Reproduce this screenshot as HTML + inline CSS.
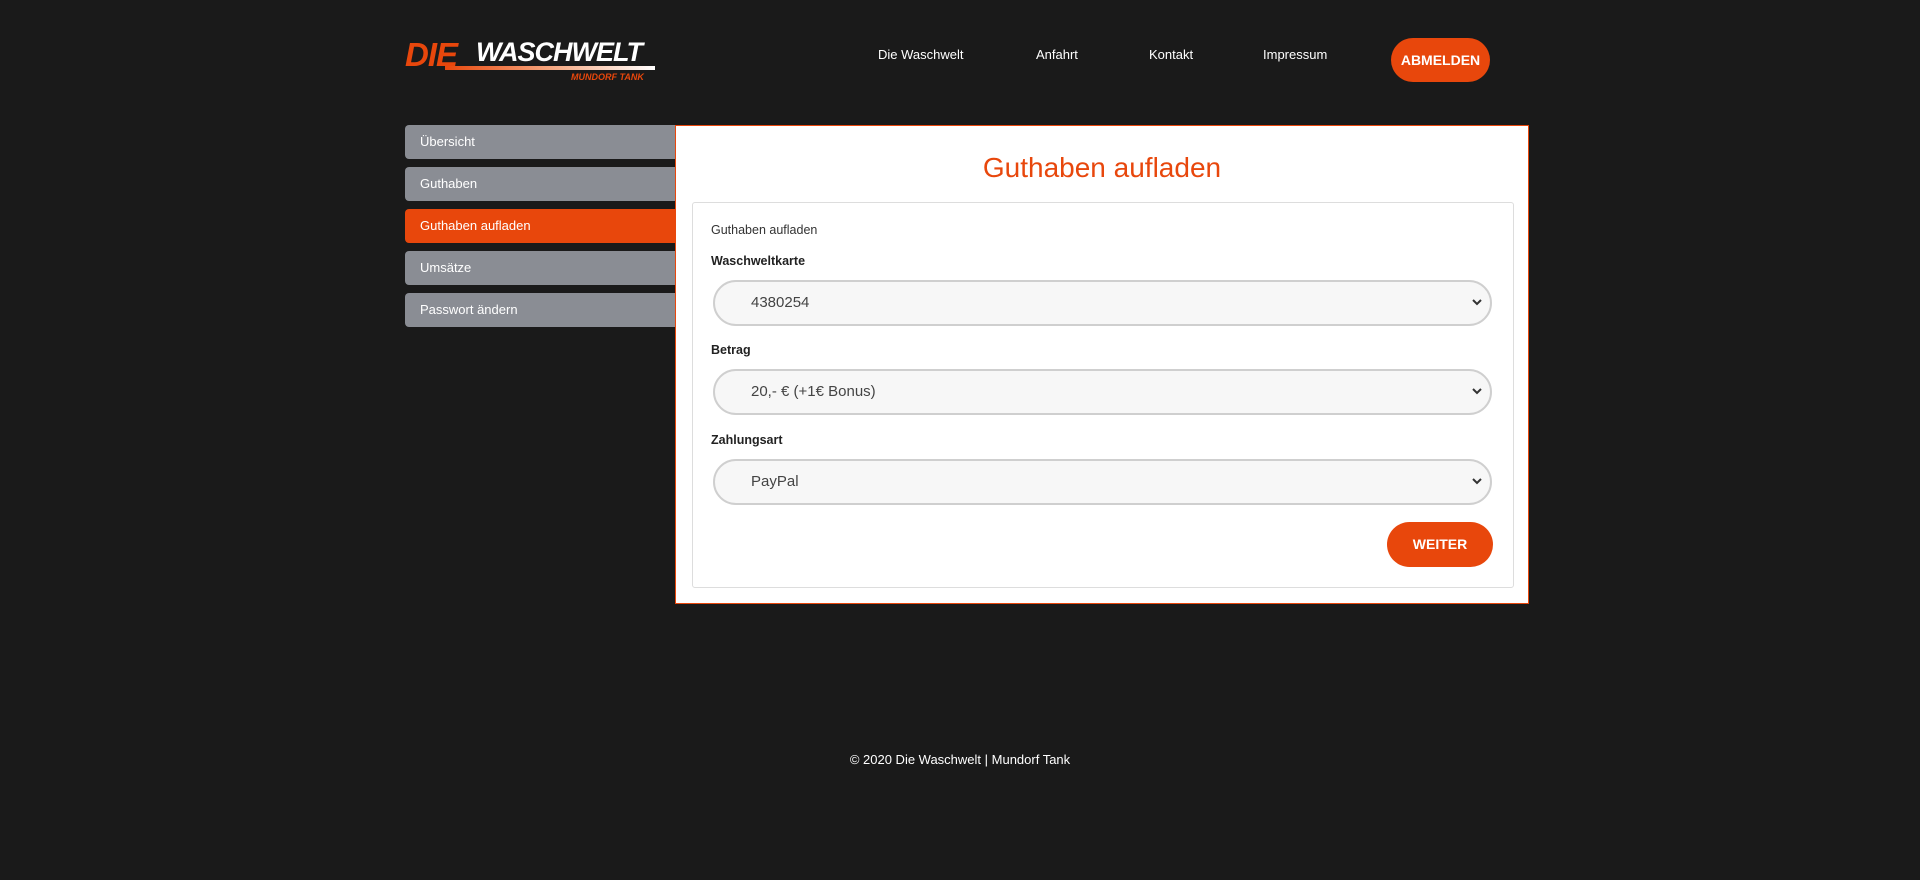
<!DOCTYPE html>
<html><head><meta charset="utf-8"><style>
*{box-sizing:border-box;margin:0;padding:0}
body{width:1920px;height:880px;background:#1a1a1a;font-family:"Liberation Sans",Arial,sans-serif;position:relative;overflow:hidden;color:#fff}
.a{position:absolute}
.nav{font-size:13px;top:47px;color:#fff}
.side{left:405px;width:270px;height:34px;background:#8a8d94;border-radius:4px 0 0 4px;font-size:13px;line-height:34px;padding-left:15px;color:#fff}
.lbl{left:711px;font-size:12.5px;font-weight:bold;color:#222}
.sel{left:713px;width:779px;height:46px;border:2px solid #cfcfcf;border-radius:23px;background:#f7f7f7;font-size:15px;color:#444;line-height:42px;padding-left:36px}
.sel svg{position:absolute;right:8px;top:16px}
</style></head><body>
<div class="a" style="left:405px;top:36px;font-size:33px;font-weight:bold;font-style:italic;color:#e8470c;letter-spacing:-1px">DIE</div>
<div class="a" style="left:476px;top:37px;font-size:27px;font-weight:bold;font-style:italic;color:#fff;letter-spacing:-1px">WASCHWELT</div>
<div class="a" style="left:445px;top:66px;width:210px;height:4px;background:linear-gradient(90deg,#e8470c,#f5a67f 50%,#fff)"></div>
<div class="a" style="left:571px;top:72px;font-size:9px;font-weight:bold;font-style:italic;color:#e8470c">MUNDORF TANK</div>
<div class="a nav" style="left:878px">Die Waschwelt</div>
<div class="a nav" style="left:1036px">Anfahrt</div>
<div class="a nav" style="left:1149px">Kontakt</div>
<div class="a nav" style="left:1263px">Impressum</div>
<div class="a" style="left:1391px;top:38px;width:99px;height:44px;border-radius:22px;background:#e8470c;font-size:14px;font-weight:bold;text-align:center;line-height:44px">ABMELDEN</div>
<div class="a side" style="top:125px">Übersicht</div>
<div class="a side" style="top:167px">Guthaben</div>
<div class="a side" style="top:209px;background:#e8470c">Guthaben aufladen</div>
<div class="a side" style="top:251px">Umsätze</div>
<div class="a side" style="top:293px">Passwort ändern</div>
<div class="a" style="left:675px;top:125px;width:854px;height:479px;background:#fff;border:1px solid #e8470c"></div>
<div class="a" style="left:675px;top:152px;width:854px;text-align:center;font-size:28px;color:#e8470c">Guthaben aufladen</div>
<div class="a" style="left:692px;top:202px;width:822px;height:386px;border:1px solid #ddd;border-radius:3px"></div>
<div class="a" style="left:711px;top:223px;font-size:12.5px;color:#333">Guthaben aufladen</div>
<div class="a lbl" style="top:254px">Waschweltkarte</div>
<div class="a sel" style="top:280px">4380254<svg width="10" height="8" viewBox="0 0 10 8"><path d="M1 2l4 4 4-4" stroke="#333" stroke-width="2" fill="none"/></svg></div>
<div class="a lbl" style="top:343px">Betrag</div>
<div class="a sel" style="top:369px">20,- € (+1€ Bonus)<svg width="10" height="8" viewBox="0 0 10 8"><path d="M1 2l4 4 4-4" stroke="#333" stroke-width="2" fill="none"/></svg></div>
<div class="a lbl" style="top:433px">Zahlungsart</div>
<div class="a sel" style="top:459px">PayPal<svg width="10" height="8" viewBox="0 0 10 8"><path d="M1 2l4 4 4-4" stroke="#333" stroke-width="2" fill="none"/></svg></div>
<div class="a" style="left:1387px;top:522px;width:106px;height:45px;border-radius:23px;background:#e8470c;font-size:14px;font-weight:bold;text-align:center;line-height:45px">WEITER</div>
<div class="a" style="left:0;top:752px;width:1920px;text-align:center;font-size:13px">© 2020 Die Waschwelt | Mundorf Tank</div>
</body></html>
